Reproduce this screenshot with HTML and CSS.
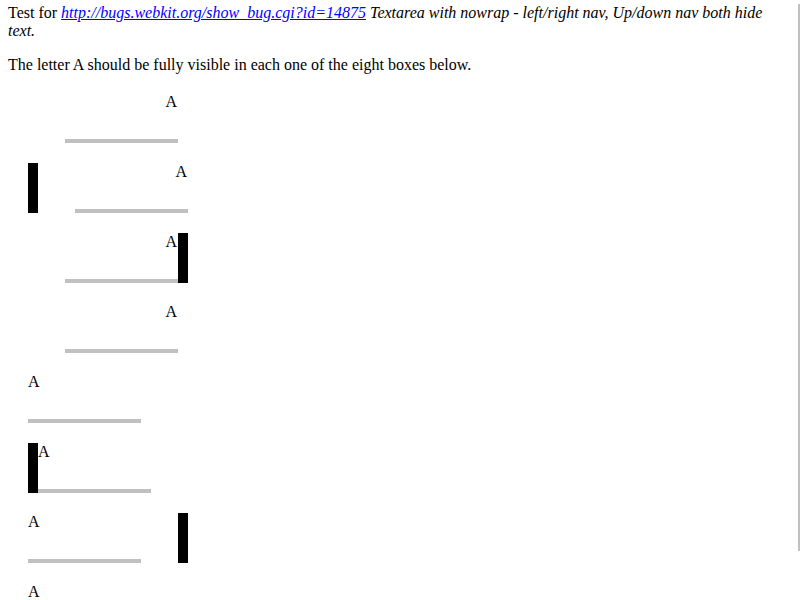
FILE: index.html
```html
<!DOCTYPE html>
<html>
<head>
<meta charset="utf-8">
<link rel="stylesheet" href="styles.css">
</head>
<body>
<div class="intro">
  <p class="title">Test for <i><a href="#">http://bugs.webkit.org/show_bug.cgi?id=14875</a> Textarea with nowrap - left/right nav, Up/down nav both hide text.</i></p>
  <p class="note">The letter A should be fully visible in each one of the eight boxes below.</p>
</div>
<div class="boxes">
  <div class="box">
    <div class="pane right"><span class="a">A</span><span class="bar"></span></div>
  </div>
  <div class="box">
    <div class="blk"></div>
    <div class="pane right"><span class="a">A</span><span class="bar"></span></div>
  </div>
  <div class="box">
    <div class="pane right"><span class="a">A</span><span class="bar"></span></div>
    <div class="blk"></div>
  </div>
  <div class="box">
    <div class="pane right"><span class="a">A</span><span class="bar"></span></div>
  </div>
  <div class="box">
    <div class="pane left"><span class="a">A</span><span class="bar"></span></div>
  </div>
  <div class="box">
    <div class="blk"></div>
    <div class="pane left"><span class="a">A</span><span class="bar"></span></div>
  </div>
  <div class="box">
    <div class="pane left"><span class="a">A</span><span class="bar"></span></div>
    <div class="blk"></div>
  </div>
  <div class="box">
    <div class="pane left"><span class="a">A</span><span class="bar"></span></div>
  </div>
</div>
<div class="edge"></div>
</body>
</html>
```
FILE: styles.css
```css
html, body {
  margin: 0;
  background: #fff;
}
body {
  padding: 4px 8px 0 8px;
  font-family: "Liberation Serif", "Times New Roman", serif;
  font-size: 16px;
  color: #000;
  overflow: hidden;
  height: 600px;
  box-sizing: border-box;
}
.intro p {
  margin: 0;
  line-height: 18px;
}
.intro a {
  color: #00f;
}
.note {
  margin-top: 16px !important;
}
.boxes {
  margin-top: 19px;
  padding-left: 20px;
  display: flex;
  flex-direction: column;
  gap: 20px;
}
.box {
  display: flex;
  height: 50px;
}
.blk {
  width: 10px;
  height: 50px;
  background: #000;
}
.pane {
  width: 150px;
  height: 50px;
  display: flex;
  flex-direction: column;
  justify-content: space-between;
}
.pane.right {
  align-items: flex-end;
}
.pane.left {
  align-items: flex-start;
}
.a {
  line-height: 18px;
}
.pane.right .a {
  padding-right: 1px;
}
.bar {
  width: 113px;
  height: 4px;
  background: #c0c0c0;
}
.edge {
  position: fixed;
  right: 0;
  top: 4px;
  width: 2px;
  height: 547px;
  background: #c0c0c0;
}
```
